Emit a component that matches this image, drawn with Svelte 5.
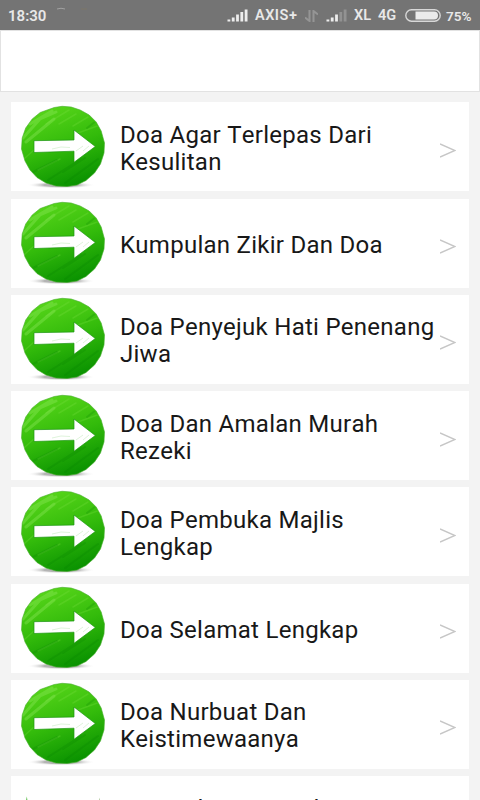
<script lang="ts">
    const items = [
        "Doa Agar Terlepas Dari Kesulitan",
        "Kumpulan Zikir Dan Doa",
        "Doa Penyejuk Hati Penenang Jiwa",
        "Doa Dan Amalan Murah Rezeki",
        "Doa Pembuka Majlis Lengkap",
        "Doa Selamat Lengkap",
        "Doa Nurbuat Dan Keistimewaanya",
    ];
    const last = "Kumpulan Doa Selama Dari";
</script>

{#snippet signal(faded: number)}
    <svg class="signal" width="21" height="13" viewBox="0 0 21 13">
        {#each [2, 4, 7, 9.5, 12] as h, i}
            <rect x={0.5 + i * 4.3} y={12.5 - h} width="2.800" height={h} fill={i >= 5 - faded ? "#929292" : "#ededed"} />
        {/each}
    </svg>
{/snippet}

{#snippet chevron()}
    <svg class="chevron" width="16" height="15" viewBox="0 0 16 15">
        <path d="M0 1l15 6.500L0 14" fill="none" stroke="#c6c6c6" stroke-width="1.400" />
    </svg>
{/snippet}

<div class="screen">
    <header>
        <span class="time">18:30</span>
        <svg class="traces" width="80" height="14" viewBox="0 0 80 14">
            <path d="M10 4q4-1.500 8 0" fill="none" stroke="#a2a2a2" />
            <path d="M34 4h6" stroke="#7d7768" />
        </svg>
        <div class="status">
            {@render signal(0)}
            <span class="axis">AXIS+</span>
            <svg class="data" width="13" height="12" viewBox="0 0 13 12">
                <path d="M4.500 0v11L0 7.500M8.500 12V1L13 4.500" fill="none" stroke="#959595" stroke-width="2" />
            </svg>
            {@render signal(2)}
            <span class="xl">XL</span>
            <span class="lte">4G</span>
            <svg class="battery" width="36" height="13" viewBox="0 0 36 13">
                <rect x=".8" y=".8" width="34.400" height="11.400" rx="5.700" fill="none" stroke="#d8d8d8" stroke-width="1.400" />
                <path d="M10.500 2.500H29a4 4 0 0 1 0 8H10.500z" fill="#ebebeb" />
            </svg>
            <span class="percent">75%</span>
        </div>
    </header>
    <div class="banner"></div>
    <ul>
        {#each items as item}
            <li>
                <svg class="icon" width="90" height="86" viewBox="0 0 90 86">
                    <defs>
                        <linearGradient id="ball" x1=".3" y1="0" x2=".65" y2="1">
                            <stop offset="0" stop-color="#58d61a" />
                            <stop offset=".5" stop-color="#33bb0b" />
                            <stop offset="1" stop-color="#089000" />
                        </linearGradient>
                        <radialGradient id="shade">
                            <stop offset=".5" stop-color="#b4b4b4" />
                            <stop offset="1" stop-color="#fff" stop-opacity="0" />
                        </radialGradient>
                        <clipPath id="disc"><ellipse cx="44.700" cy="42" rx="41" ry="39" /></clipPath>
                    </defs>
                    <ellipse cx="43" cy="81" rx="34" ry="3.500" fill="url(#shade)" />
                    <path
                        d="M36.200 3.500l8-1.200 9 .700 9 3 9 5 7 7 5 9 3.300 12-.500 10-3.500 11-6 9-8.500 7.500-9 4.500-10 1.500-11-.500-10-3-9-5.500-7-7.500-5-9-3.500-12 .700-11 3.500-10 6.500-9 8-6.500z"
                        fill="url(#ball)"
                        stroke="#45ac2a"
                        stroke-width=".6"
                        stroke-linejoin="round"
                    />
                    <g clip-path="url(#disc)" fill="none" stroke-linecap="round">
                        <path d="M5 34L22 15l16-7M8 38l28-23M12 20l22-13" stroke="#93ea62" stroke-width="3" opacity=".35" />
                        <path d="M28 20l23-14M41 20l17-10M55 22l15-9M60 29l22-8M7 54l9-8M20 66l22-11" stroke="#80e548" stroke-width="1.500" opacity=".25" />
                        <path d="M15 68l24-12M30 76l33-21M47 79l33-24M45 68l22-14M69 24l13-10" stroke="#057f00" stroke-width="2" opacity=".22" />
                    </g>
                    <path d="M16 36.700l40-.700V26l21.300 16.500L56 58.300V47.200l-40 1.300z" fill="#fff" stroke="#1c9612" stroke-width=".7" />
                    <path d="M34 45l9-2 9 .500M58 47l7-5M65 47l6-5" fill="none" stroke="#d6f0d2" stroke-width=".8" />
                </svg>
                <p>{item}</p>
                {@render chevron()}
            </li>
        {/each}
        <li>
            <svg class="icon" width="90" height="86" viewBox="0 0 90 86">
                <path d="M7.500 26L8.800 18.500 10 26z" fill="#48b836" />
                <path d="M80.500 26l1-6.500 1 6.500z" fill="#94b67c" />
            </svg>
            <p>{last}<br />&nbsp;</p>
            {@render chevron()}
        </li>
    </ul>
</div>

<style>
    :global(body) {
        overflow: hidden;
    }

    .screen {
        height: 800px;
        overflow: hidden;
        background: #f3f3f3;
        font-family: Roboto, sans-serif;
    }

    header {
        display: flex;
        align-items: center;
        box-sizing: border-box;
        height: 30px;
        padding: 1px 8px 0;
        background: #747474;
        color: #e8e8e8;
        font-size: 14.500px;
        font-weight: 600;
    }

    .time {
        width: 39px;
        font-size: 15px;
    }

    .traces {
        align-self: flex-start;
        margin-top: 4px;
    }

    .status {
        display: flex;
        align-items: center;
        margin-left: auto;
    }

    .axis {
        width: 43px;
        margin: 0 7px 0 7px;
        letter-spacing: 0.500px;
    }

    .data {
        margin-right: 8px;
    }

    .xl {
        width: 18px;
        margin: 0 6px 0 7px;
    }

    .lte {
        width: 20px;
        margin-right: 7px;
        font-size: 14.500px;
    }

    .percent {
        width: 26px;
        margin-left: 5px;
        font-size: 13.500px;
    }

    .banner {
        box-sizing: border-box;
        height: 62px;
        border: 1px solid #e2e2e2;
        background: #fff;
    }

    ul {
        display: flex;
        flex-direction: column;
        gap: 7.250px;
        margin: 0;
        padding: 10.350px 11px 0;
        list-style: none;
    }

    li {
        display: flex;
        align-items: center;
        flex: none;
        box-sizing: border-box;
        height: 89px;
        padding: 0 12px 0 7px;
        background: #fff;
    }

    .icon {
        flex: none;
    }

    p {
        flex: none;
        width: 321px;
        margin: 0 0 0 12px;
        padding-top: 4px;
        color: #181818;
        font-size: 24px;
        line-height: 27px;
        letter-spacing: 0.270px;
        font-kerning: none;
    }

    .chevron {
        flex: none;
        margin: 7px 0 0 -1px;
    }
</style>
